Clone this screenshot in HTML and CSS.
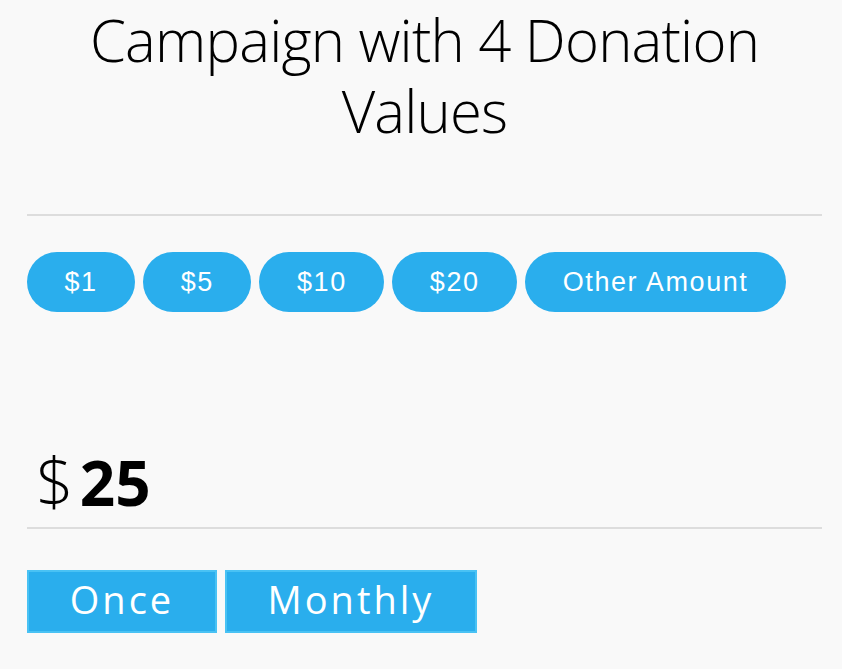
FILE: index.html
```html
<!DOCTYPE html>
<html>
<head>
<meta charset="utf-8">
<link rel="stylesheet" href="styles.css">
</head>
<body>
<div class="page">
  <h1 class="title">Campaign with 4 Donation Values</h1>
  <div class="rule"></div>
  <div class="amounts">
    <button class="pill">$1</button>
    <button class="pill">$5</button>
    <button class="pill">$10</button>
    <button class="pill">$20</button>
    <button class="pill">Other Amount</button>
  </div>
  <div class="total"><span class="cur">$</span><span class="num">25</span></div>
  <div class="rule"></div>
  <div class="freq">
    <button class="fbtn once">Once</button>
    <button class="fbtn monthly">Monthly</button>
  </div>
</div>
</body>
</html>
```
FILE: styles.css
```css
html, body {
  margin: 0;
  padding: 0;
  background: #f9f9f9;
}
.page {
  padding: 0 20px 0 27px;
  width: 795px;
}
.title {
  margin: 0;
  padding-top: 4px;
  font-family: "Open Sans", sans-serif;
  font-weight: 300;
  font-size: 58px;
  line-height: 71px;
  text-align: center;
  color: #000;
  height: 214px;
  box-sizing: border-box;
  letter-spacing: -0.8px;
}
.rule {
  height: 2px;
  background: #dddddd;
}
.amounts {
  display: flex;
  gap: 8px;
  margin-top: 36px;
}
.pill {
  height: 60px;
  border: none;
  border-radius: 30px;
  background: #2aaeed;
  color: #fff;
  font-family: "Liberation Sans", Arial, sans-serif;
  font-size: 27px;
  letter-spacing: 1.6px;
  padding: 0 37.5px;
}
.total {
  margin-top: 130px;
  height: 85px;
  padding-left: 9px;
  font-family: "Open Sans", sans-serif;
  line-height: 76px;
}
.cur {
  font-weight: 300;
  font-size: 66px;
  margin-right: 6px;
}
.num {
  font-weight: 700;
  font-size: 62px;
}
.freq {
  display: flex;
  gap: 8px;
  margin-top: 41px;
}
.fbtn {
  height: 63px;
  border: 2px solid #49c2f4;
  background: #2aaeed;
  color: #fff;
  font-family: "Open Sans", sans-serif;
  font-size: 38px;
  letter-spacing: 3px;
  padding: 0 0 5px;
}
.once { width: 190px; }
.monthly { width: 252px; }
```
